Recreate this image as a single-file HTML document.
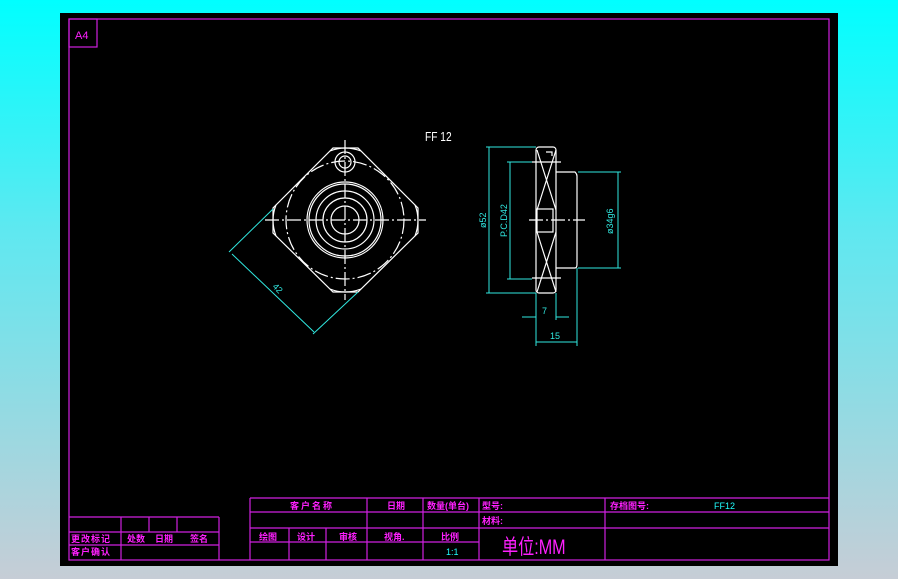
<!DOCTYPE html>
<html><head><meta charset="utf-8"><style>
html,body{margin:0;padding:0;width:898px;height:579px;overflow:hidden;background:linear-gradient(#00ffff 0%,#5fe8f0 40%,#c6cdd6 100%);}
svg{position:absolute;left:0;top:0}
text{font-family:"Liberation Sans","Noto Sans CJK SC",sans-serif}
.m{fill:#ff20ff;font-size:9px;font-weight:bold}
</style></head><body>
<svg width="898" height="579" viewBox="0 0 898 579">
<rect x="60" y="13" width="778" height="553" fill="#000"/>
<g stroke="#d020e0" stroke-width="1.2" fill="none">
<rect x="69" y="19" width="760" height="541"/>
<rect x="69" y="19" width="28" height="28"/>
<line x1="69" y1="517" x2="219" y2="517"/>
<line x1="69" y1="532" x2="219" y2="532"/>
<line x1="69" y1="545" x2="219" y2="545"/>
<line x1="219" y1="517" x2="219" y2="560"/>
<line x1="121" y1="517" x2="121" y2="560"/>
<line x1="149" y1="517" x2="149" y2="532"/>
<line x1="177" y1="517" x2="177" y2="532"/>
<line x1="250" y1="498" x2="829" y2="498"/>
<line x1="250" y1="512" x2="829" y2="512"/>
<line x1="250" y1="528" x2="829" y2="528"/>
<line x1="250" y1="542" x2="479" y2="542"/>
<line x1="250" y1="498" x2="250" y2="560"/>
<line x1="289" y1="528" x2="289" y2="560"/>
<line x1="326" y1="528" x2="326" y2="560"/>
<line x1="367" y1="498" x2="367" y2="560"/>
<line x1="423" y1="498" x2="423" y2="560"/>
<line x1="479" y1="498" x2="479" y2="560"/>
<line x1="605" y1="498" x2="605" y2="560"/>
</g>
<text x="75" y="39" fill="#ff20ff" font-size="11">A4</text>
<text class="m" x="71" y="542" letter-spacing="1">更改标记</text>
<text class="m" x="127" y="542">处数</text>
<text class="m" x="155" y="542">日期</text>
<text class="m" x="190" y="542">签名</text>
<text class="m" x="71" y="555" letter-spacing="1">客户确认</text>
<text class="m" x="290" y="509" letter-spacing="2">客户名称</text>
<text class="m" x="387" y="509">日期</text>
<text class="m" x="427" y="509">数量(单台)</text>
<text class="m" x="482" y="509">型号:</text>
<text class="m" x="610" y="509">存档图号:</text>
<text x="714" y="509" fill="#20ffff" font-size="9">FF12</text>
<text class="m" x="482" y="524">材料:</text>
<text class="m" x="259" y="540">绘图</text>
<text class="m" x="297" y="540">设计</text>
<text class="m" x="339" y="540">审核</text>
<text class="m" x="384" y="540">视角.</text>
<text class="m" x="441" y="540">比例</text>
<text x="446" y="555" fill="#20ffff" font-size="9">1:1</text>
<text transform="translate(502,554) scale(0.85,1.1)" fill="#ff20ff" font-size="19" font-family="Liberation Serif,Noto Serif CJK SC,serif">单位:MM</text>
<text transform="translate(425,141) scale(0.85,1.1)" fill="#fff" font-size="12" font-family="Liberation Mono,monospace">FF 12</text>
<g stroke="#fff" stroke-width="1.2" fill="none">
<path d="M333 148 L358 148 L418 208 L418 233 L358 292 L333 292 L273 233 L273 208 Z"/>
<path d="M330 151 Q345 145 361 151 M330 289 Q345 295 361 289 M276 205 Q270 220 276 236 M415 205 Q421 220 415 236"/>
<circle cx="345" cy="220" r="38"/>
<circle cx="345" cy="220" r="36"/>
<circle cx="345" cy="220" r="29"/>
<circle cx="345" cy="220" r="22"/>
<circle cx="345" cy="220" r="14"/>
<circle cx="345" cy="162" r="10"/>
<circle cx="345" cy="162" r="6"/>
<circle cx="345" cy="220" r="59" stroke-dasharray="14 3 2 3"/>
<line x1="265" y1="220" x2="426" y2="220" stroke-dasharray="14 3 2 3"/>
<line x1="345" y1="140" x2="345" y2="300" stroke-dasharray="14 3 2 3"/>
</g>
<g stroke="#30e8e0" stroke-width="1" fill="none">
<line x1="273" y1="209" x2="229" y2="252"/>
<line x1="358" y1="292" x2="313" y2="334"/>
<line x1="232" y1="254" x2="314" y2="332"/>
</g>
<text x="0" y="0" fill="#30e8e0" font-size="9" transform="translate(272,287) rotate(45)">42</text>
<g stroke="#fff" stroke-width="1.2" fill="none">
<rect x="536" y="147" width="20" height="146" rx="3"/>
<path d="M556 172 L575 172 Q577 174 577 176 L577 264 Q577 268 575 268 L556 268"/>
<rect x="537" y="209" width="16" height="23"/>
<path d="M537 150 L556 210 M556 150 L537 210 M537 232 L556 292 M556 232 L537 292"/>
<line x1="532" y1="162" x2="561" y2="162"/>
<line x1="532" y1="278" x2="561" y2="278"/>
<path d="M546 152 L552 152 L552 156"/>
<line x1="529" y1="220" x2="585" y2="220" stroke-dasharray="14 3 2 3"/>
</g>
<g stroke="#30e8e0" stroke-width="1" fill="none">
<line x1="486" y1="147" x2="536" y2="147"/>
<line x1="486" y1="293" x2="536" y2="293"/>
<line x1="489" y1="147" x2="489" y2="293"/>
<line x1="507" y1="162" x2="532" y2="162"/>
<line x1="507" y1="279" x2="532" y2="279"/>
<line x1="510" y1="162" x2="510" y2="279"/>
<line x1="578" y1="172" x2="621" y2="172"/>
<line x1="578" y1="268" x2="621" y2="268"/>
<line x1="618" y1="172" x2="618" y2="268"/>
<line x1="536" y1="293" x2="536" y2="346"/>
<line x1="556" y1="293" x2="556" y2="320"/>
<line x1="577" y1="268" x2="577" y2="346"/>
<line x1="522" y1="317" x2="536" y2="317"/>
<line x1="556" y1="317" x2="569" y2="317"/>
<line x1="536" y1="342" x2="577" y2="342"/>
</g>
<g fill="#30e8e0" font-size="9">
<text transform="translate(486,228) rotate(-90)">ø52</text>
<text transform="translate(507,237) rotate(-90)">P.C.D42</text>
<text transform="translate(613,234) rotate(-90)">ø34g6</text>
<text x="542" y="314">7</text>
<text x="550" y="339">15</text>
</g>
</svg>
</body></html>
